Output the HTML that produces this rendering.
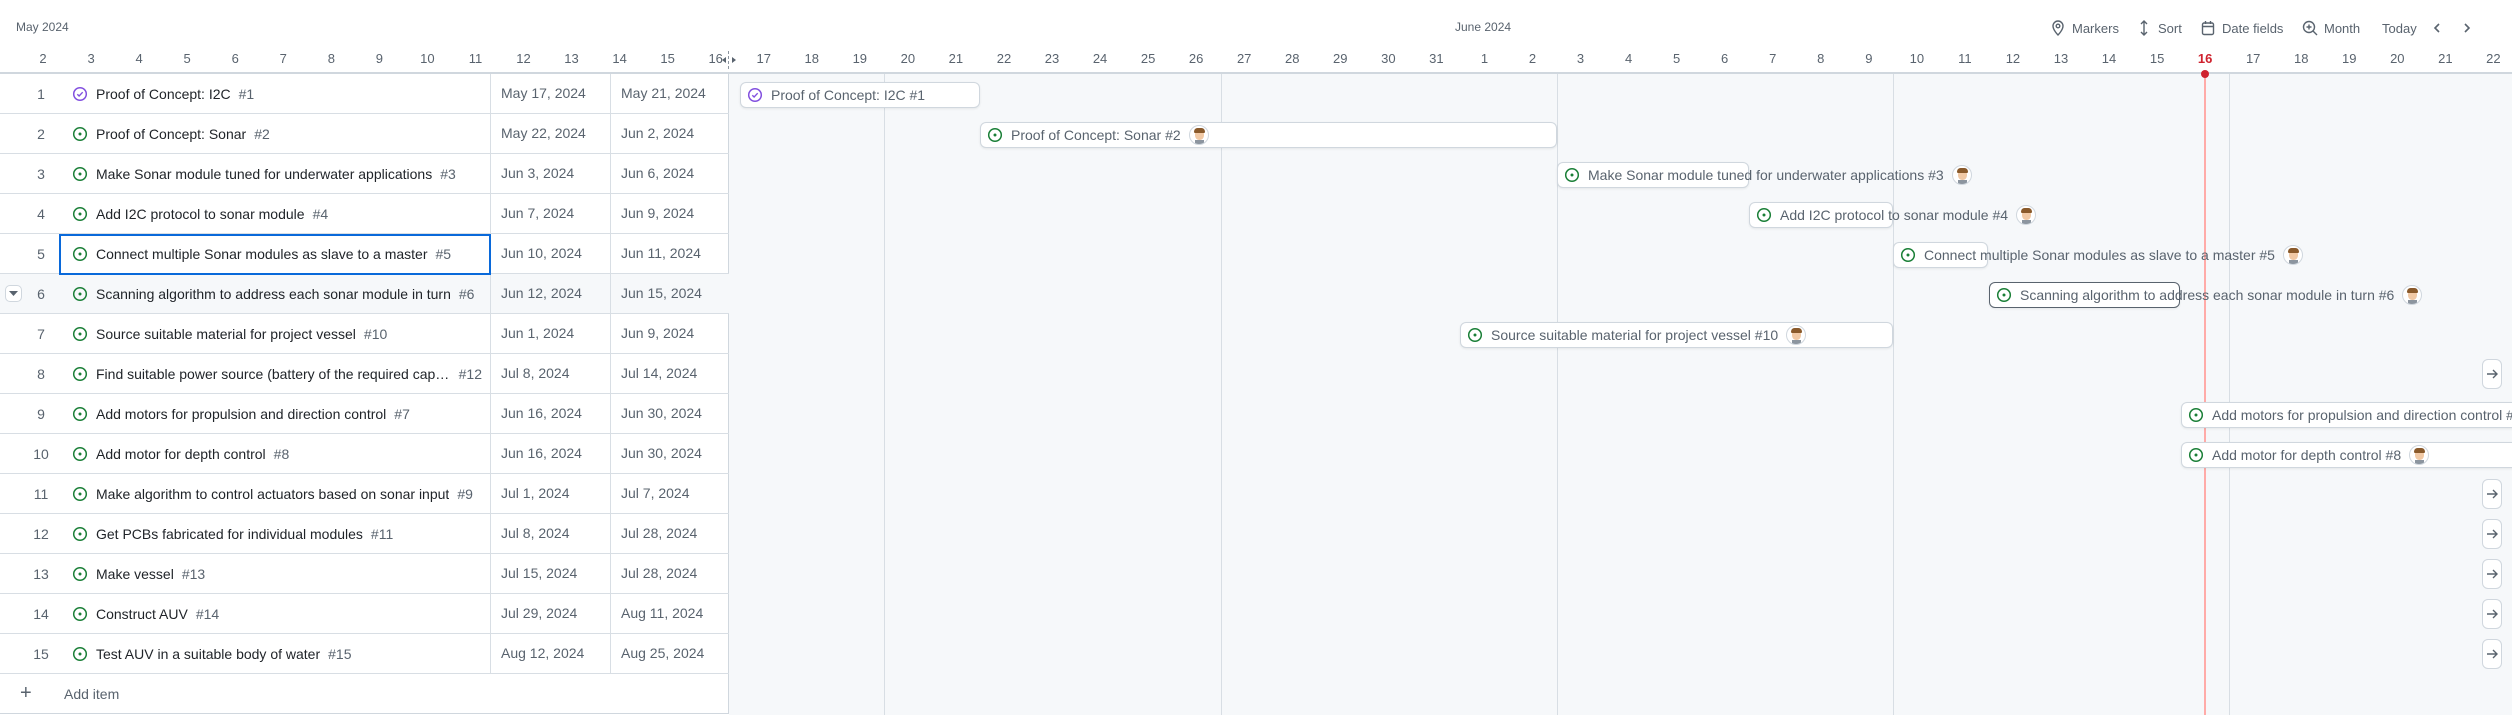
<!DOCTYPE html>
<html><head><meta charset="utf-8">
<style>
*{box-sizing:border-box;margin:0;padding:0}
body{width:2512px;height:715px;overflow:hidden;background:#fff;font-family:"Liberation Sans",sans-serif;font-size:14px;color:#1f2328;position:relative}
.abs{position:absolute}
#tl{position:absolute;left:729px;top:74px;width:1783px;height:641px;background:#f6f8fa}
.wk{position:absolute;top:74px;height:641px;width:1px;background:#d8dee4}
#hdrline{position:absolute;left:0;top:72px;width:2512px;height:2px;background:#d0d7de}
.days{position:absolute;left:19px;top:51px;display:flex;font-size:13px;color:#59636e}
.days span{width:48.05px;text-align:center;flex:none}
.month{position:absolute;top:20px;font-size:12px;color:#59636e}
.tb{position:absolute;top:19px;font-size:13px;color:#59636e;display:flex;align-items:center;height:18px}
.tb svg{margin-right:6px}
.row{position:absolute;left:0;width:729px;height:40px;border-bottom:1px solid #d8dee4}
.num{position:absolute;left:26px;width:30px;text-align:center;top:12px;color:#59636e}
.ic{position:absolute;left:72px;top:12px}
.ttl{position:absolute;left:96px;top:11px;width:386px;display:flex;white-space:nowrap;line-height:18px}
.ttl .t{overflow:hidden;text-overflow:ellipsis;flex:0 1 auto}
.ttl .n{color:#59636e;margin-left:8px;flex:none}
.d1,.d2{position:absolute;top:0;height:39px;line-height:39px;padding-left:10px;color:#59636e;border-left:1px solid #d8dee4}
.d1{left:490px;width:120px}.d2{left:610px;width:119px}
.bar{position:absolute;height:26px;background:#fff;border:1px solid #d0d7de;border-radius:6px;box-shadow:0 1px 2px rgba(31,35,40,.08)}
.bt{position:absolute;height:26px;display:flex;align-items:center;white-space:nowrap;color:#59636e;font-size:14px}
.bt svg{margin-right:8px;flex:none}
.av{width:20px;height:20px;border-radius:50%;border:1px solid #d0d7de;background:#fff;margin-left:8px;position:relative;overflow:hidden;flex:none}
.av:before{content:"";position:absolute;left:5px;top:4px;width:9px;height:10px;background:#f1c9a5;border-radius:45%}
.av:after{content:"";position:absolute;left:4px;top:2px;width:11px;height:5px;background:#8a5a2b;border-radius:5px 5px 2px 2px}
.av i{position:absolute;left:5px;top:14px;width:9px;height:6px;background:#8c959f}
.arr{position:absolute;left:2482px;width:20px;height:30px;background:#fff;border:1px solid #d0d7de;border-radius:6px;display:flex;align-items:center;justify-content:center}
</style></head><body>
<div id="tl"></div>
<div class="wk" style="left:884px"></div>
<div class="wk" style="left:1221px"></div>
<div class="wk" style="left:1557px"></div>
<div class="wk" style="left:1893px"></div>
<div class="wk" style="left:2229px"></div>
<div class="abs" style="left:2204px;top:74px;width:2px;height:641px;background:#ffaba8"></div>

<div class="month" style="left:16px">May 2024</div>
<div class="month" style="left:1455px">June 2024</div>

<div class="tb" style="left:2050px"><svg width="16" height="16" viewBox="0 0 16 16" fill="none" stroke="#59636e" stroke-width="1.4"><path d="M8 15s5-5 5-9A5 5 0 0 0 3 6c0 4 5 9 5 9z"/><circle cx="8" cy="6" r="1.8"/></svg>Markers</div>
<div class="tb" style="left:2136px"><svg width="16" height="16" viewBox="0 0 16 16" fill="none" stroke="#59636e" stroke-width="1.4"><path d="M8 1v14M5 4l3-3 3 3M5 12l3 3 3-3"/></svg>Sort</div>
<div class="tb" style="left:2200px"><svg width="16" height="16" viewBox="0 0 16 16" fill="none" stroke="#59636e" stroke-width="1.4"><rect x="2.5" y="3" width="11" height="11.5" rx="1.5"/><path d="M2.5 6.5h11M5.5 1v3M10.5 1v3"/></svg>Date fields</div>
<div class="tb" style="left:2302px"><svg width="16" height="16" viewBox="0 0 16 16" fill="none" stroke="#59636e" stroke-width="1.4"><circle cx="7" cy="7" r="5.5"/><path d="M11 11l4 4M7 4.5v5M4.5 7h5"/></svg>Month</div>
<div class="tb" style="left:2382px">Today</div>
<div class="tb" style="left:2432px"><svg width="10" height="16" viewBox="0 0 10 16" fill="none" stroke="#59636e" stroke-width="1.6"><path d="M7 4L3 8l4 4"/></svg></div>
<div class="tb" style="left:2462px"><svg width="10" height="16" viewBox="0 0 10 16" fill="none" stroke="#59636e" stroke-width="1.6"><path d="M3 4l4 4-4 4"/></svg></div>

<div class="days">
<span>2</span><span>3</span><span>4</span><span>5</span><span>6</span><span>7</span><span>8</span><span>9</span><span>10</span><span>11</span><span>12</span><span>13</span><span>14</span><span>15</span><span>16</span><span>17</span><span>18</span><span>19</span><span>20</span><span>21</span><span>22</span><span>23</span><span>24</span><span>25</span><span>26</span><span>27</span><span>28</span><span>29</span><span>30</span><span>31</span><span>1</span><span>2</span><span>3</span><span>4</span><span>5</span><span>6</span><span>7</span><span>8</span><span>9</span><span>10</span><span>11</span><span>12</span><span>13</span><span>14</span><span>15</span><span style="color:#cf222e;font-weight:bold">16</span><span>17</span><span>18</span><span>19</span><span>20</span><span>21</span><span>22</span>
</div>
<div class="abs" style="left:728px;top:51px;width:1px;height:18px;border-left:1px dashed #8c959f"></div>
<svg class="abs" style="left:721px;top:55px" width="16" height="10" viewBox="0 0 16 10" fill="#59636e"><path d="M1 5l4-3v6zM15 5l-4-3v6z"/></svg>
<div id="hdrline"></div>
<div class="abs" style="left:2201px;top:70px;width:8px;height:8px;border-radius:50%;background:#cf222e"></div>

<!-- table -->
<div class="abs" style="left:0;top:74px;width:729px;height:640px;background:#fff;border-right:1px solid #d0d7de"></div>

<svg width="0" height="0" style="position:absolute"><defs>
<g id="open"><circle cx="8" cy="8" r="6.3" fill="none" stroke="#1a7f37" stroke-width="1.5"/><circle cx="8" cy="8" r="1.5" fill="#1a7f37"/></g>
<g id="done"><circle cx="8" cy="8" r="6.3" fill="none" stroke="#8250df" stroke-width="1.5"/><path d="M5.3 8.2l1.8 1.8 3.6-3.8" fill="none" stroke="#8250df" stroke-width="1.4"/></g>
</defs></svg>

<div class="row" style="top:74px"><div class="num">1</div><svg class="ic" width="16" height="16"><use href="#done"/></svg><div class="ttl"><span class="t">Proof of Concept: I2C</span><span class="n">#1</span></div><div class="d1">May 17, 2024</div><div class="d2">May 21, 2024</div></div>
<div class="row" style="top:114px"><div class="num">2</div><svg class="ic" width="16" height="16"><use href="#open"/></svg><div class="ttl"><span class="t">Proof of Concept: Sonar</span><span class="n">#2</span></div><div class="d1">May 22, 2024</div><div class="d2">Jun 2, 2024</div></div>
<div class="row" style="top:154px"><div class="num">3</div><svg class="ic" width="16" height="16"><use href="#open"/></svg><div class="ttl" style="width:370px"><span class="t">Make Sonar module tuned for underwater applications</span><span class="n">#3</span></div><div class="d1">Jun 3, 2024</div><div class="d2">Jun 6, 2024</div></div>
<div class="row" style="top:194px"><div class="num">4</div><svg class="ic" width="16" height="16"><use href="#open"/></svg><div class="ttl"><span class="t">Add I2C protocol to sonar module</span><span class="n">#4</span></div><div class="d1">Jun 7, 2024</div><div class="d2">Jun 9, 2024</div></div>
<div class="row" style="top:234px"><div class="num">5</div><svg class="ic" width="16" height="16"><use href="#open"/></svg><div class="ttl"><span class="t">Connect multiple Sonar modules as slave to a master</span><span class="n">#5</span></div><div class="d1">Jun 10, 2024</div><div class="d2">Jun 11, 2024</div></div>
<div class="row" style="top:274px;background:#f6f8fa"><div class="abs" style="left:5px;top:11px;width:17px;height:17px;border:1px solid #d0d7de;border-radius:5px;background:#fff"></div><svg class="abs" style="left:9px;top:17px" width="9" height="5"><path d="M0 0h9L4.5 5z" fill="#59636e"/></svg><div class="num">6</div><svg class="ic" width="16" height="16"><use href="#open"/></svg><div class="ttl" style="width:380px"><span class="t">Scanning algorithm to address each sonar module in turn</span><span class="n">#6</span></div><div class="d1">Jun 12, 2024</div><div class="d2">Jun 15, 2024</div></div>
<div class="row" style="top:314px"><div class="num">7</div><svg class="ic" width="16" height="16"><use href="#open"/></svg><div class="ttl"><span class="t">Source suitable material for project vessel</span><span class="n">#10</span></div><div class="d1">Jun 1, 2024</div><div class="d2">Jun 9, 2024</div></div>
<div class="row" style="top:354px"><div class="num">8</div><svg class="ic" width="16" height="16"><use href="#open"/></svg><div class="ttl"><span class="t">Find suitable power source (battery of the required capacity)</span><span class="n">#12</span></div><div class="d1">Jul 8, 2024</div><div class="d2">Jul 14, 2024</div></div>
<div class="row" style="top:394px"><div class="num">9</div><svg class="ic" width="16" height="16"><use href="#open"/></svg><div class="ttl"><span class="t">Add motors for propulsion and direction control</span><span class="n">#7</span></div><div class="d1">Jun 16, 2024</div><div class="d2">Jun 30, 2024</div></div>
<div class="row" style="top:434px"><div class="num">10</div><svg class="ic" width="16" height="16"><use href="#open"/></svg><div class="ttl"><span class="t">Add motor for depth control</span><span class="n">#8</span></div><div class="d1">Jun 16, 2024</div><div class="d2">Jun 30, 2024</div></div>
<div class="row" style="top:474px"><div class="num">11</div><svg class="ic" width="16" height="16"><use href="#open"/></svg><div class="ttl" style="width:380px"><span class="t">Make algorithm to control actuators based on sonar input</span><span class="n">#9</span></div><div class="d1">Jul 1, 2024</div><div class="d2">Jul 7, 2024</div></div>
<div class="row" style="top:514px"><div class="num">12</div><svg class="ic" width="16" height="16"><use href="#open"/></svg><div class="ttl"><span class="t">Get PCBs fabricated for individual modules</span><span class="n">#11</span></div><div class="d1">Jul 8, 2024</div><div class="d2">Jul 28, 2024</div></div>
<div class="row" style="top:554px"><div class="num">13</div><svg class="ic" width="16" height="16"><use href="#open"/></svg><div class="ttl"><span class="t">Make vessel</span><span class="n">#13</span></div><div class="d1">Jul 15, 2024</div><div class="d2">Jul 28, 2024</div></div>
<div class="row" style="top:594px"><div class="num">14</div><svg class="ic" width="16" height="16"><use href="#open"/></svg><div class="ttl"><span class="t">Construct AUV</span><span class="n">#14</span></div><div class="d1">Jul 29, 2024</div><div class="d2">Aug 11, 2024</div></div>
<div class="row" style="top:634px"><div class="num">15</div><svg class="ic" width="16" height="16"><use href="#open"/></svg><div class="ttl"><span class="t">Test AUV in a suitable body of water</span><span class="n">#15</span></div><div class="d1">Aug 12, 2024</div><div class="d2">Aug 25, 2024</div></div>
<div class="row" style="top:674px;border-bottom:1px solid #d0d7de"><div class="abs" style="left:20px;top:8px;font-size:20px;color:#59636e;line-height:22px">+</div><div class="abs" style="left:64px;top:12px;color:#59636e">Add item</div></div>
<div class="abs" style="left:59px;top:234px;width:432px;height:41px;border:2px solid #0969da"></div>

<!-- bars -->
<div class="bar" style="left:740px;top:82px;width:240px"></div>
<div class="bt" style="left:747px;top:82px"><svg width="16" height="16"><use href="#done"/></svg>Proof of Concept: I2C #1</div>
<div class="bar" style="left:980px;top:122px;width:577px"></div>
<div class="bt" style="left:987px;top:122px"><svg width="16" height="16"><use href="#open"/></svg>Proof of Concept: Sonar #2<span class="av"><i></i></span></div>
<div class="bar" style="left:1557px;top:162px;width:192px"></div>
<div class="bt" style="left:1564px;top:162px"><svg width="16" height="16"><use href="#open"/></svg>Make Sonar module tuned for underwater applications #3<span class="av"><i></i></span></div>
<div class="bar" style="left:1749px;top:202px;width:144px"></div>
<div class="bt" style="left:1756px;top:202px"><svg width="16" height="16"><use href="#open"/></svg>Add I2C protocol to sonar module #4<span class="av"><i></i></span></div>
<div class="bar" style="left:1893px;top:242px;width:95px"></div>
<div class="bt" style="left:1900px;top:242px"><svg width="16" height="16"><use href="#open"/></svg>Connect multiple Sonar modules as slave to a master #5<span class="av"><i></i></span></div>
<div class="bar" style="left:1989px;top:282px;width:191px;border-color:#59636e"></div>
<div class="bt" style="left:1996px;top:282px"><svg width="16" height="16"><use href="#open"/></svg>Scanning algorithm to address each sonar module in turn #6<span class="av"><i></i></span></div>
<div class="bar" style="left:1460px;top:322px;width:433px"></div>
<div class="bt" style="left:1467px;top:322px"><svg width="16" height="16"><use href="#open"/></svg>Source suitable material for project vessel #10<span class="av"><i></i></span></div>
<div class="bar" style="left:2181px;top:402px;width:400px"></div>
<div class="bt" style="left:2188px;top:402px"><svg width="16" height="16"><use href="#open"/></svg>Add motors for propulsion and direction control #7</div>
<div class="bar" style="left:2181px;top:442px;width:400px"></div>
<div class="bt" style="left:2188px;top:442px"><svg width="16" height="16"><use href="#open"/></svg>Add motor for depth control #8<span class="av"><i></i></span></div>

<div class="arr" style="top:359px"><svg width="12" height="12" viewBox="0 0 12 12" fill="none" stroke="#59636e" stroke-width="1.4"><path d="M1 6h10M7 2l4 4-4 4"/></svg></div>
<div class="arr" style="top:479px"><svg width="12" height="12" viewBox="0 0 12 12" fill="none" stroke="#59636e" stroke-width="1.4"><path d="M1 6h10M7 2l4 4-4 4"/></svg></div>
<div class="arr" style="top:519px"><svg width="12" height="12" viewBox="0 0 12 12" fill="none" stroke="#59636e" stroke-width="1.4"><path d="M1 6h10M7 2l4 4-4 4"/></svg></div>
<div class="arr" style="top:559px"><svg width="12" height="12" viewBox="0 0 12 12" fill="none" stroke="#59636e" stroke-width="1.4"><path d="M1 6h10M7 2l4 4-4 4"/></svg></div>
<div class="arr" style="top:599px"><svg width="12" height="12" viewBox="0 0 12 12" fill="none" stroke="#59636e" stroke-width="1.4"><path d="M1 6h10M7 2l4 4-4 4"/></svg></div>
<div class="arr" style="top:639px"><svg width="12" height="12" viewBox="0 0 12 12" fill="none" stroke="#59636e" stroke-width="1.4"><path d="M1 6h10M7 2l4 4-4 4"/></svg></div>
</body></html>
